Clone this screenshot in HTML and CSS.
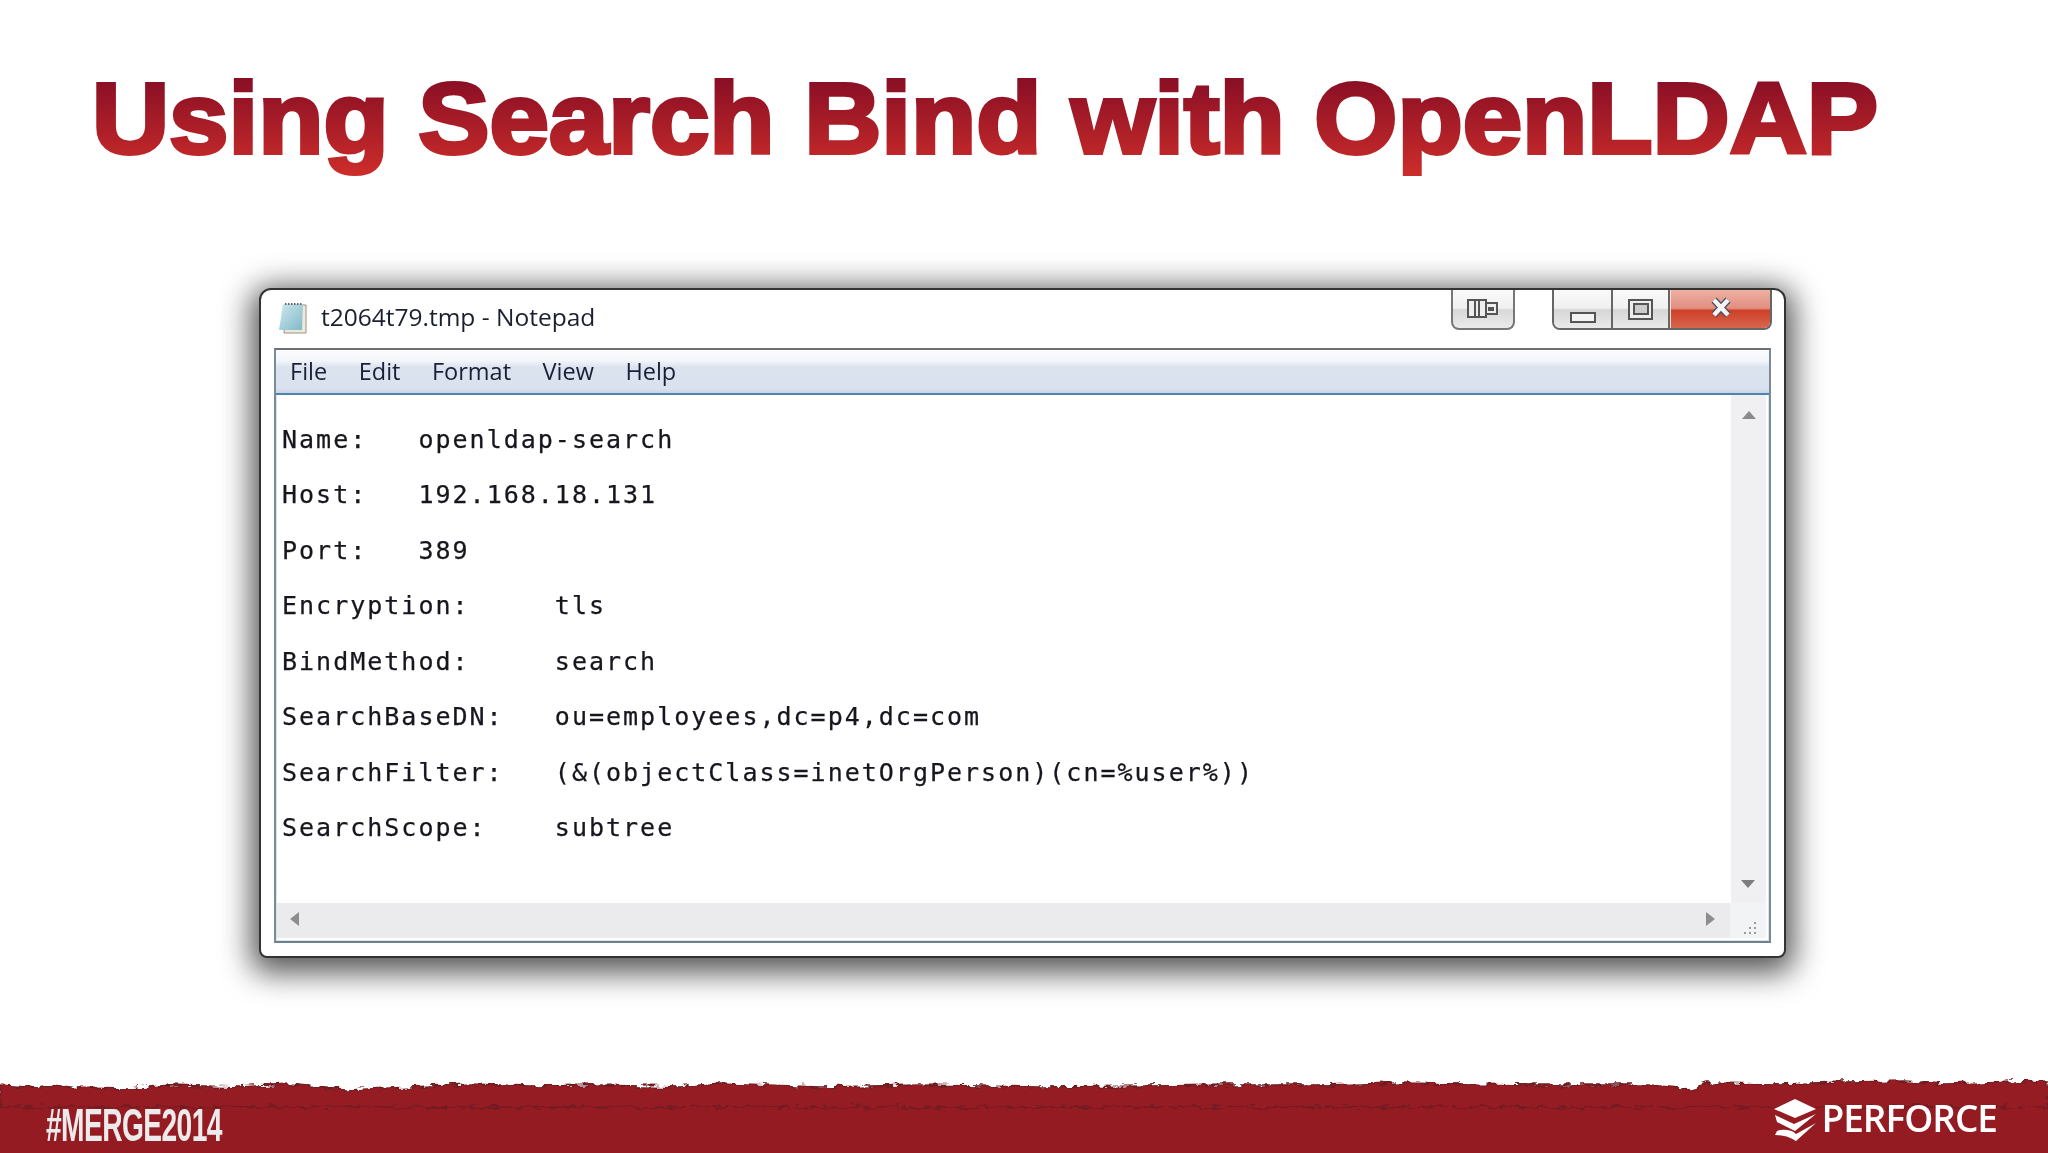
FILE: index.html
```html
<!DOCTYPE html>
<html lang="en">
<head>
<meta charset="utf-8">
<title>Using Search Bind with OpenLDAP</title>
<link rel="stylesheet" href="styles.css">
</head>
<body>
<main class="slide">
  <h1 class="title">
    <svg class="title-svg" width="2048" height="288" viewBox="0 0 2048 288">
      <defs><linearGradient id="titleGrad" gradientUnits="userSpaceOnUse" x1="0" y1="80" x2="0" y2="175"><stop offset="0" stop-color="#8a0f25"/><stop offset="1" stop-color="#cc2d2a"/></linearGradient></defs>
      <text class="title-text" x="92" y="153" textLength="1786" lengthAdjust="spacingAndGlyphs">Using Search Bind with OpenLDAP</text>
    </svg>
  </h1>
  <section class="window">
    <div class="titlebar">
      <svg class="app-icon" width="30" height="34" viewBox="0 0 30 34">
        <defs><linearGradient id="pad" x1="0" y1="0" x2="1" y2="1"><stop offset="0" stop-color="#cfe9ee"/><stop offset="1" stop-color="#7fb8c8"/></linearGradient></defs>
        <path d="M8 4H28V32H6Z" fill="#efe9dc" stroke="#9c9280"/>
        <path d="M5 3H25L24 29H1Z" fill="url(#pad)"/>
        <path d="M7 3H24" stroke="#666" stroke-width="2" stroke-dasharray="1.5 1.5"/>
      </svg>
      <span class="window-name">t2064t79.tmp - Notepad</span>
      <div class="snap">
        <svg width="32" height="20" viewBox="0 0 32 20"><path d="M1 1H19V18H1ZM8 1V18M12 1V18" fill="#eee" stroke="#555" stroke-width="2"/><path d="M19 4H30V15H19Z" fill="#eee" stroke="#555" stroke-width="2"/><path d="M21 8H27V12H21Z" fill="#555"/></svg>
      </div>
      <div class="caption">
        <div class="cap-btn cap-min"><span class="min-glyph"></span></div>
        <div class="cap-btn cap-max"><span class="max-glyph"></span></div>
        <div class="cap-btn cap-close">
          <svg width="24" height="21" viewBox="0 0 24 21"><path d="M5 3L19 18M19 3L5 18" stroke="#4e4e58" stroke-width="7"/><path d="M5 3L19 18M19 3L5 18" stroke="#f4f4f6" stroke-width="4.5"/></svg>
        </div>
      </div>
    </div>
    <div class="frame">
      <nav class="menubar"><span>File</span><span>Edit</span><span>Format</span><span>View</span><span>Help</span></nav>
      <div class="client">
        <pre class="text">Name:	openldap-search
Host:	192.168.18.131
Port:	389
Encryption:	tls
BindMethod:	search
SearchBaseDN:	ou=employees,dc=p4,dc=com
SearchFilter:	(&amp;(objectClass=inetOrgPerson)(cn=%user%))
SearchScope:	subtree</pre>
        <div class="vscroll"><span class="arrow arrow-up"></span><span class="arrow arrow-down"></span></div>
      </div>
      <div class="hscroll">
        <div class="htrack"><span class="arrow arrow-left"></span><span class="arrow arrow-right"></span></div>
        <div class="grip">
          <svg width="18" height="18" viewBox="0 0 18 18"><path d="M13 2h2v2h-2zM13 7h2v2h-2zM8 7h2v2H8zM13 12h2v2h-2zM8 12h2v2H8zM3 12h2v2H3z" fill="#9a9a9a"/></svg>
        </div>
      </div>
    </div>
  </section>
  <footer class="footer">
    <svg class="torn" width="2048" height="28" viewBox="0 0 2048 28">
      <defs>
        <filter id="rough" x="0" y="-40%" width="100%" height="180%">
          <feTurbulence type="fractalNoise" baseFrequency="0.09 0.2" numOctaves="3" seed="7"/>
          <feDisplacementMap in="SourceGraphic" scale="9"/>
        </filter>
      </defs>
      <path class="torn-fill" filter="url(#rough)" d="M0 14L40 17L52 14L80 17L130 18L170 14L240 16L290 13L345 19L390 17L470 13L530 15L600 14L680 16L720 12L820 16L920 14L1040 16L1150 15L1230 14L1320 14L1400 12L1530 14L1650 14L1690 18L1708 12L1778 13L1845 11L1905 10L1945 13L2048 10V36H0Z"/>
    </svg>
    <div class="band">
      <span class="hashtag">#MERGE2014</span>
      <div class="brand">
        <svg width="44" height="42" viewBox="0 0 44 42"><path d="M22 0L43 10L22 19L1 10Z" fill="#fff"/><path d="M2 16L21 25L43 15L22 32L4 23Z" fill="#fff"/><path d="M4 32L7 31Q18 30 23 35L43 24L23 42Q14 36 2 36Z" fill="#fff"/></svg>
        <span class="brand-name">PERFORCE</span>
      </div>
    </div>
  </footer>
</main>
</body>
</html>
```
FILE: styles.css
```css
* { box-sizing: border-box; }
html, body { margin: 0; padding: 0; background: #fff; }
.slide {
  width: 2048px;
  height: 1153px;
  display: flex;
  flex-direction: column;
  overflow: hidden;
  background: #fff;
  filter: blur(0.45px);
}
.title {
  margin: 0;
  height: 288px;
  flex: none;
}
.title-svg { display: block; }
.title-text {
  font: bold 101px "Liberation Sans", Arial, sans-serif;
  fill: url(#titleGrad);
  stroke: url(#titleGrad);
  stroke-width: 4px;
}
.window {
  margin-left: 259px;
  width: 1527px;
  height: 670px;
  flex: none;
  display: flex;
  flex-direction: column;
  background: #fff;
  border: 2px solid #333;
  border-radius: 12px 12px 8px 8px;
  box-shadow: 0 7px 30px 8px rgba(0, 0, 0, .66);
}
.titlebar {
  height: 58px;
  flex: none;
  display: flex;
  align-items: flex-start;
  padding: 0 12px 0 17px;
}
.app-icon { margin-top: 11px; }
.window-name {
  margin: 10px 0 0 13px;
  font: 24.5px/34px "Open Sans", sans-serif;
  color: #1a2030;
}
.snap {
  margin-left: auto;
  width: 64px;
  height: 40px;
  display: flex;
  align-items: center;
  justify-content: center;
  border: 2px solid #777;
  border-top: 0;
  border-radius: 0 0 8px 8px;
  background: linear-gradient(180deg, #fafafa 0, #f0f0f0 48%, #d8d8d8 52%, #ebebeb 100%);
}
.caption {
  margin-left: 37px;
  display: flex;
  height: 40px;
  border: 2px solid #666;
  border-top: 0;
  border-radius: 0 0 8px 8px;
  overflow: hidden;
}
.cap-btn { display: flex; align-items: center; justify-content: center; }
.cap-min, .cap-max {
  background: linear-gradient(180deg, #fafafa 0, #f0f0f0 48%, #d6d6d6 52%, #eaeaea 100%);
  border-right: 2px solid #666;
}
.cap-min { width: 59px; padding-top: 16px; }
.cap-max { width: 57px; }
.cap-close {
  width: 100px;
  padding-bottom: 3px;
  background: linear-gradient(180deg, #eeb0a2 0, #e08f80 48%, #cf4028 54%, #d9654e 100%);
  border-left: 1px solid #fbdcd4;
}
.min-glyph { width: 26px; height: 11px; border: 2px solid #555; background: #f3f3f3; }
.max-glyph { width: 25px; height: 21px; border: 2px solid #555; background: #eee; display: flex; align-items: center; justify-content: center; }
.max-glyph::after { content: ""; width: 12px; height: 8px; border: 2px solid #555; background: #ccc; }
.frame {
  flex: 1;
  margin: 0 13px 13px;
  display: flex;
  flex-direction: column;
  min-height: 0;
  border: 2px solid #7b8a99;
  border-top-color: #707070;
  border-bottom-color: #6f7f8c;
  box-shadow: inset 0 0 0 1px #d5e6ef;
}
.menubar {
  height: 45px;
  flex: none;
  display: flex;
  align-items: center;
  gap: 31.5px;
  padding: 0 0 2px 14px;
  font: 23.5px/30px "Open Sans", sans-serif;
  color: #1a1f35;
  background: linear-gradient(180deg, #fbfcfd 0, #f4f6fa 24%, #dbe3ef 40%, #dae2ef 90%, #c9d3e2 100%);
  border-bottom: 2px solid #4a86b4;
}
.client {
  flex: 1;
  min-height: 0;
  display: flex;
}
.text {
  flex: 1;
  margin: 0;
  padding: 16.5px 0 0 6px;
  font: 25px/55.5px "DejaVu Sans Mono", monospace;
  letter-spacing: 2px;
  tab-size: 8;
  color: #16161e;
  -webkit-text-stroke: 0.25px #16161e;
}
.vscroll {
  width: 35px;
  margin-right: 3px;
  position: relative;
  background: #f0f0f2;
}
.hscroll {
  height: 35px;
  flex: none;
  display: flex;
  margin: 0 3px 3px 1px;
  background: #f0f0f2;
}
.htrack { flex: 1; position: relative; background: #ebebed; }
.grip {
  width: 36px;
  display: flex;
  align-items: flex-end;
  justify-content: center;
  padding-left: 4px;
  background: #f2f3f5;
}
.arrow { position: absolute; width: 0; height: 0; border-style: solid; border-color: transparent; }
.arrow-up { top: 16px; left: 11px; border-width: 0 7px 8px; border-bottom-color: #8a8a8a; }
.arrow-down { bottom: 15px; left: 10px; border-width: 8px 7px 0; border-top-color: #7d7d7d; }
.arrow-left { top: 9px; left: 13px; border-width: 7px 9px 7px 0; border-right-color: #8d8d8d; }
.arrow-right { top: 9px; right: 15px; border-width: 7px 0 7px 9px; border-left-color: #8d8d8d; }
.footer { margin-top: auto; flex: none; }
.torn { display: block; margin-bottom: -1px; overflow: visible; }
.torn-fill { fill: #951b23; stroke: #6d1c20; stroke-width: 1.5; }
.band {
  height: 55px;
  display: flex;
  align-items: flex-start;
  justify-content: space-between;
  padding: 0 51px 0 46px;
  background: #951b23;
}
.hashtag {
  margin-top: 6px;
  font: bold 47px/42px "Liberation Sans", sans-serif;
  letter-spacing: -1px;
  color: #ebebeb;
  transform: scaleX(.6);
  transform-origin: left center;
}
.brand { display: flex; align-items: flex-start; gap: 4px; margin-top: 0; }
.brand svg { margin-top: 1px; }
.brand-name {
  margin-top: -1px;
  font: 600 37px/42px "Open Sans", sans-serif;
  letter-spacing: -1px;
  color: #fff;
}
```
